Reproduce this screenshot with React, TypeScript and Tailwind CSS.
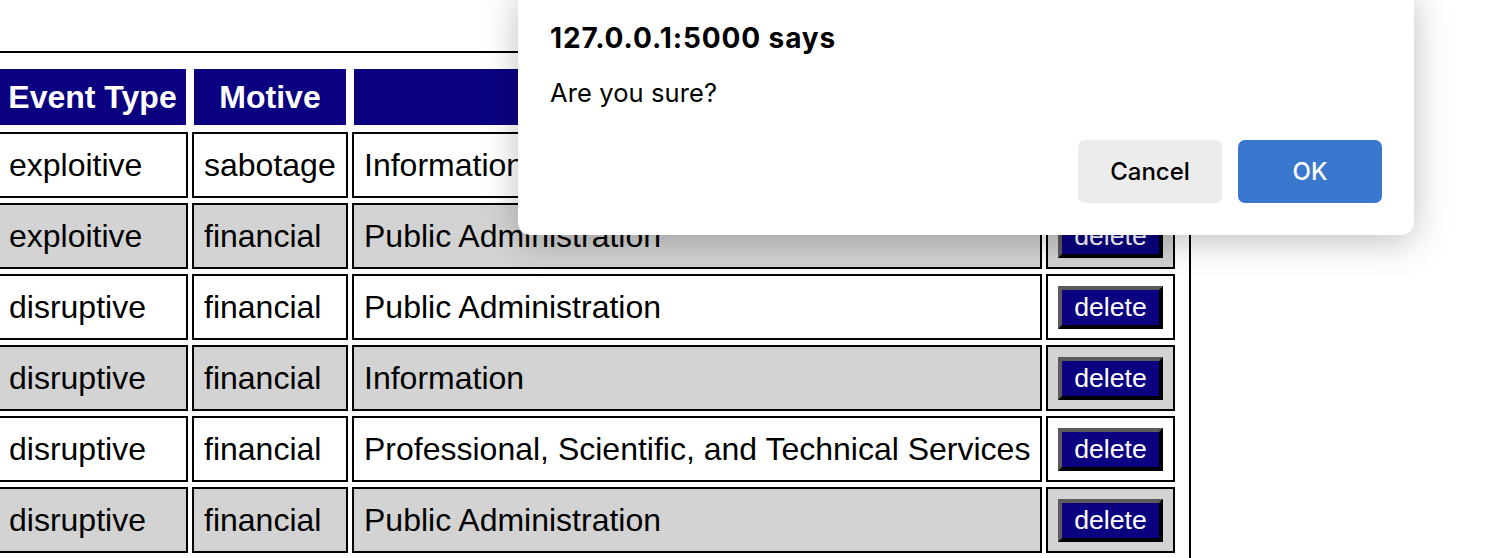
import React from "react";

const rows = [
  { type: "exploitive", motive: "sabotage", industry: "Information" },
  { type: "exploitive", motive: "financial", industry: "Public Administration" },
  { type: "disruptive", motive: "financial", industry: "Public Administration" },
  { type: "disruptive", motive: "financial", industry: "Information" },
  { type: "disruptive", motive: "financial", industry: "Professional, Scientific, and Technical Services" },
  { type: "disruptive", motive: "financial", industry: "Public Administration" },
];

const th = "h-[60px] border-2 border-white bg-[#0a0080] text-white font-bold text-[32px] text-center px-0 whitespace-nowrap";
const td = "h-[66px] border-2 border-black px-[10px] text-[32px] text-left align-middle text-black whitespace-nowrap";

function EventsTable() {
  return (
    <div className="-ml-[19px] mt-[51px] w-fit border-2 border-black pt-[9px] pr-[10px] pl-[10px] pb-[10px]">
      <table className="table-fixed border-separate border-spacing-x-[4px] border-spacing-y-[5px] w-[1186px] font-['Liberation_Sans',Arial,sans-serif]">
        <thead>
          <tr>
            <th className={`${th} w-[191px]`}>Event Type</th>
            <th className={`${th} w-[156px]`}>Motive</th>
            <th className={`${th} w-[690px]`}>Industry</th>
            <th className={`${th} w-[129px]`}>Action</th>
          </tr>
        </thead>
        <tbody>
          {rows.map((r, i) => {
            const bg = i % 2 === 0 ? "bg-white" : "bg-[#d3d3d3]";
            return (
              <tr key={i}>
                <td className={`${td} ${bg}`}>{r.type}</td>
                <td className={`${td} ${bg}`}>{r.motive}</td>
                <td className={`${td} ${bg}`}>{r.industry}</td>
                <td className={`${td} ${bg}`}>
                  <button className="flex h-[43px] w-[105px] items-center justify-center border-4 border-t-[#5b5b5b] border-l-[#5b5b5b] border-b-black border-r-black bg-[#0a0080] text-[26.67px] leading-none text-white">
                    delete
                  </button>
                </td>
              </tr>
            );
          })}
        </tbody>
      </table>
    </div>
  );
}

function ConfirmDialog() {
  return (
    <div className="absolute left-[518px] top-[-10px] w-[896px] rounded-[13px] bg-white px-[32px] pt-[32px] pb-[32px] shadow-[0_6px_36px_rgba(0,0,0,0.25)] font-['Inter',sans-serif]">
      <p className="text-[28px] font-bold leading-[32px] tracking-[0.9px] text-black">127.0.0.1:5000 says</p>
      <p className="mt-[24px] text-[25.5px] leading-[30px] tracking-[0.1px] text-black">Are you sure?</p>
      <div className="mt-[32px] flex justify-end gap-[16px]">
        <button className="h-[63px] w-[144px] rounded-[7px] bg-[#ececec] text-[24px] font-medium text-black">
          Cancel
        </button>
        <button className="h-[63px] w-[144px] rounded-[7px] bg-[#3a78cf] text-[24px] font-medium text-white">
          OK
        </button>
      </div>
    </div>
  );
}

export default function App() {
  return (
    <div className="relative h-[558px] w-[1488px] overflow-hidden bg-white">
      <EventsTable />
      <ConfirmDialog />
    </div>
  );
}
